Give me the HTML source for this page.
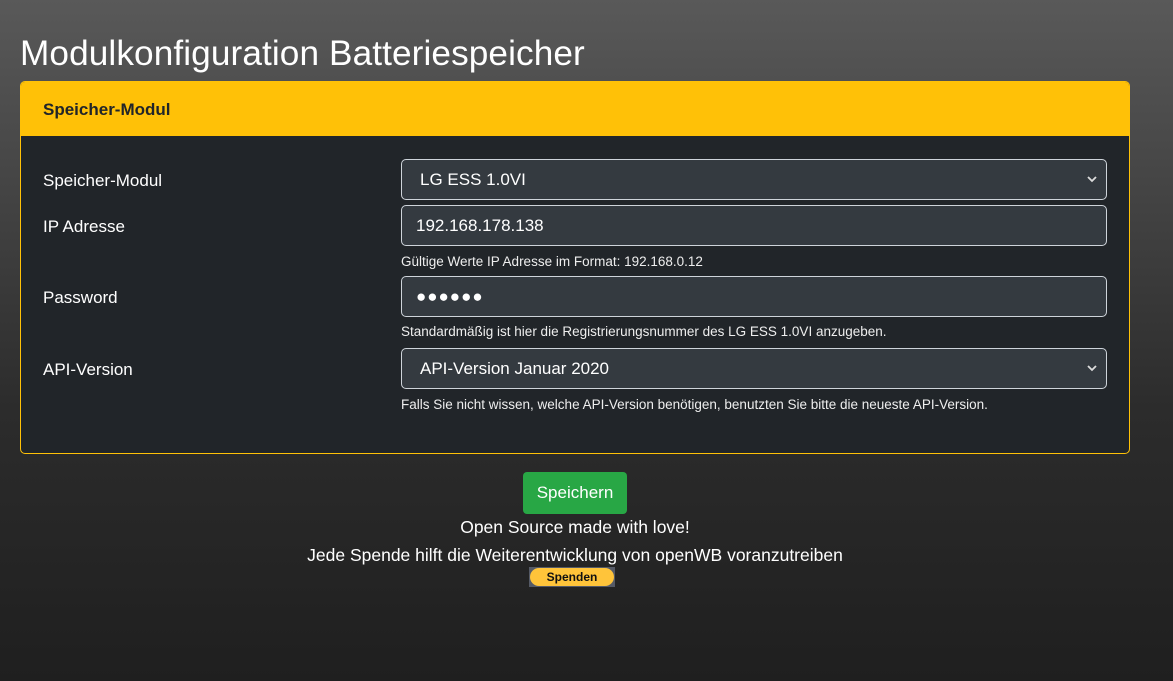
<!DOCTYPE html>
<html><head><meta charset="utf-8"><style>
*{box-sizing:border-box}
body{margin:0;width:1173px;height:681px;overflow:hidden;background:linear-gradient(#595959,#2c2c2c 60%,#1f1f1f);font-family:"Liberation Sans",sans-serif;color:#fff}
h1{position:absolute;left:20px;top:34px;margin:0;font-size:35.2px;font-weight:400;letter-spacing:0.1px}
.card{position:absolute;left:20px;top:81px;width:1110px;height:373px;border:1px solid #ffc107;border-radius:5px;background:#212529;overflow:hidden}
.hd{height:54px;background:#ffc107;color:#212529;font-weight:bold;font-size:17px;padding:18px 22px}
.lbl{position:absolute;left:22px;font-size:17px}
.in{position:absolute;left:380px;width:706px;height:41px;border:1px solid #ced4da;border-radius:5px;background:#343a40;font-size:17px;padding:10px 14px}
.sm{position:absolute;left:380px;font-size:13.5px;color:#eee}
.chev{position:absolute;right:8px;top:13px}
.btn{position:absolute;left:523px;top:472px;width:104px;height:42px;background:#28a745;border-radius:4px;font-size:17px;text-align:center;line-height:42px}
.c{position:absolute;left:0;width:1150px;text-align:center;font-size:17.5px}
.sp{position:absolute;left:529px;top:567px;width:86px;height:20px;background:#555a66}
.sp div{position:absolute;inset:1px 1px 1px 1px;background:#ffc43a;border-radius:10px;color:#111;font-size:12px;font-weight:bold;text-align:center;line-height:18px}
</style></head><body>
<h1>Modulkonfiguration Batteriespeicher</h1>
<div class="card">
<div class="hd">Speicher-Modul</div>
<div class="lbl" style="top:89px">Speicher-Modul</div>
<div class="in" style="top:77px;padding-left:18px">LG ESS 1.0VI<svg class="chev" width="12" height="12" viewBox="0 0 12 12"><path d="M2 4l4 4 4-4" stroke="#ddd" stroke-width="1.8" fill="none"/></svg></div>
<div class="lbl" style="top:135px">IP Adresse</div>
<div class="in" style="top:123px">192.168.178.138</div>
<div class="sm" style="top:172px">Gültige Werte IP Adresse im Format: 192.168.0.12</div>
<div class="lbl" style="top:206px">Password</div>
<div class="in" style="top:194px;letter-spacing:1px">●●●●●●</div>
<div class="sm" style="top:242px">Standardmäßig ist hier die Registrierungsnummer des LG ESS 1.0VI anzugeben.</div>
<div class="lbl" style="top:278px">API-Version</div>
<div class="in" style="top:266px;padding-left:18px">API-Version Januar 2020<svg class="chev" width="12" height="12" viewBox="0 0 12 12"><path d="M2 4l4 4 4-4" stroke="#ddd" stroke-width="1.8" fill="none"/></svg></div>
<div class="sm" style="top:315px">Falls Sie nicht wissen, welche API-Version benötigen, benutzten Sie bitte die neueste API-Version.</div>
</div>
<div class="btn">Speichern</div>
<div class="c" style="top:517px">Open Source made with love!</div>
<div class="c" style="top:545px">Jede Spende hilft die Weiterentwicklung von openWB voranzutreiben</div>
<div class="sp"><div>Spenden</div></div>
</body></html>
